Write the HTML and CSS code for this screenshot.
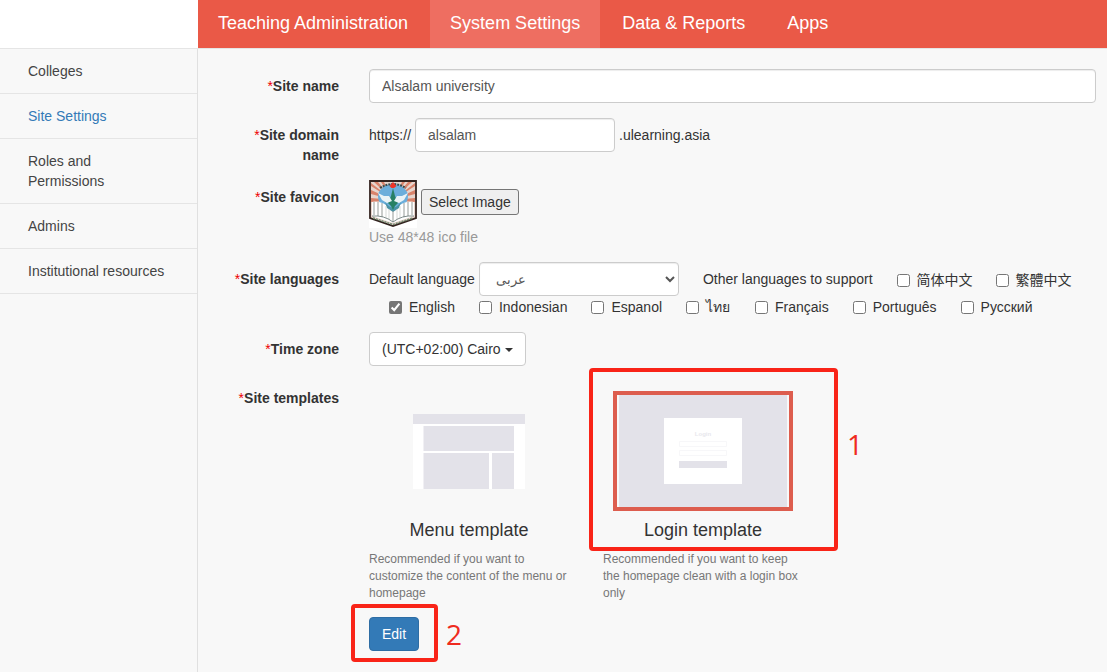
FILE: index.html
```html
<!DOCTYPE html>
<html lang="en">
<head>
<meta charset="utf-8">
<title>Site Settings</title>
<link rel="stylesheet" href="styles.css">
</head>
<body>
<header class="header">
  <div class="brand"></div>
  <nav class="tabs">
    <a class="tab">Teaching Administration</a>
    <a class="tab active">System Settings</a>
    <a class="tab">Data &amp; Reports</a>
    <a class="tab">Apps</a>
  </nav>
</header>
<div class="layout">
  <aside class="sidebar">
    <a class="side-item">Colleges</a>
    <a class="side-item current">Site Settings</a>
    <a class="side-item">Roles and Permissions</a>
    <a class="side-item">Admins</a>
    <a class="side-item">Institutional resources</a>
  </aside>
  <main class="form">
    <div class="row">
      <label class="label"><i>*</i>Site name</label>
      <input class="control" type="text" value="Alsalam university">
    </div>
    <div class="row">
      <label class="label"><i>*</i>Site domain name</label>
      <div class="domain"><span>https://</span><input class="control short" type="text" value="alsalam"><span>.ulearning.asia</span></div>
    </div>
    <div class="row">
      <label class="label"><i>*</i>Site favicon</label>
      <div>
        <div class="favicon">
          <svg width="48" height="48" viewBox="0 0 48 48">
            <rect width="48" height="48" fill="#fff"/>
            <path d="M1 1H47V38L24 46L1 38Z" fill="#e7d5cd" stroke="#33231f" stroke-width="1.8"/>
            <path d="M24 20L2 3V6ZM24 20L5 2H9ZM24 20L12 2H15ZM24 20L2 10V14ZM24 20L2 18V22ZM24 20L46 3V6ZM24 20L43 2H39ZM24 20L36 2H33ZM24 20L46 10V14ZM24 20L46 18V22Z" fill="#d9836b"/>
            <ellipse cx="24" cy="16.500" rx="15" ry="12.500" fill="#6caedb"/>
            <path d="M11 8Q24 0 37 8" fill="none" stroke="#354b50" stroke-width="2" stroke-dasharray="2 1"/>
            <path d="M3 22Q11 21 17 25L24 31L31 25Q37 21 45 22V36L24 43L3 36Z" fill="#fff"/>
            <path d="M16 22Q24 33 32 22L30 28L24 32L18 28Z" fill="#4a92a4"/>
            <path d="M24 8L26 16L29 23L26 26L24 30L22 26L19 23L22 16Z" fill="#278064"/>
            <path d="M24 2L27.500 6L25 8H22.500L20.500 6Z" fill="#ef3326"/>
            <path d="M9 13L15 16L20 16L23 21L18 23L13 20ZM39 13L33 16L28 16L25 21L30 23L35 20Z" fill="#eaf3f6"/>
            <path d="M5 22V35M9 22V36M13 23V37M24 31V42M35 23V37M39 22V36M43 22V35" fill="none" stroke="#8b908d" stroke-width=".9"/>
            <path d="M17 26V38M20 29V40M28 29V40M31 26V38" fill="none" stroke="#c4c9c6" stroke-width=".7"/>
            <path d="M3 36Q15 35 24 42Q33 35 45 36" fill="none" stroke="#606e6d" stroke-width=".8"/>
            <path d="M4 38L24 44.500L44 38" fill="none" stroke="#70886f" stroke-width="1.600" stroke-dasharray="2 1"/>
          </svg>
          <button class="pick">Select Image</button>
        </div>
        <p class="hint">Use 48*48 ico file</p>
      </div>
    </div>
    <div class="row">
      <label class="label"><i>*</i>Site languages</label>
      <div>
        <div class="lang-main">
          <span>Default language</span>
          <select class="control short lang-select"><option>عربى</option></select>
          <span class="other">Other languages to support</span>
          <label class="check cjk"><input type="checkbox"><span>简体中文</span></label>
          <label class="check cjk"><input type="checkbox"><span>繁體中文</span></label>
        </div>
        <div class="langs">
          <label class="check"><input type="checkbox" checked><span>English</span></label>
          <label class="check"><input type="checkbox"><span>Indonesian</span></label>
          <label class="check"><input type="checkbox"><span>Espanol</span></label>
          <label class="check thai"><input type="checkbox"><span>ไทย</span></label>
          <label class="check"><input type="checkbox"><span>Français</span></label>
          <label class="check"><input type="checkbox"><span>Português</span></label>
          <label class="check"><input type="checkbox"><span>Русский</span></label>
        </div>
      </div>
    </div>
    <div class="row">
      <label class="label"><i>*</i>Time zone</label>
      <button class="btn">(UTC+02:00) Cairo<span class="caret"></span></button>
    </div>
    <div class="row">
      <label class="label"><i>*</i>Site templates</label>
      <div>
        <div class="templates">
          <section class="template">
            <svg class="thumb" width="180" height="120" viewBox="0 0 180 120">
              <rect x="34" y="23" width="112" height="75" fill="#fff"/>
              <path d="M34 23h112v10H34zM44.500 35h90.500v25H44.500zM44.500 62h65.500v36H44.500zM113 62h22v36h-22z" fill="#e3e2e9"/>
            </svg>
            <h4 class="title">Menu template</h4>
            <p class="desc">Recommended if you want to customize the content of the menu or homepage</p>
          </section>
          <section class="template">
            <svg class="thumb" width="180" height="120" viewBox="0 0 180 120">
              <rect x="2" y="2" width="176" height="116" fill="#f8f8f8" stroke="#dd5d4e" stroke-width="4"/>
              <rect x="6" y="4" width="168" height="112" fill="#e3e2e9"/>
              <rect x="51" y="27" width="78" height="66" fill="#fff"/>
              <text class="thumb-text" x="90" y="44.500" text-anchor="middle">Login</text>
              <path d="M66.500 50.500h47v5h-47zM66.500 59.500h47v5h-47z" fill="none" stroke="#f7f7f9"/>
              <rect x="66" y="70" width="48" height="7" fill="#e3e2e9"/>
            </svg>
            <h4 class="title">Login template</h4>
            <p class="desc">Recommended if you want to keep the homepage clean with a login box only</p>
          </section>
        </div>
        <button class="btn primary">Edit</button>
      </div>
    </div>
  </main>
</div>
<div class="mark mark-one"></div>
<span class="mark-num num-one">1</span>
<div class="mark mark-two"></div>
<span class="mark-num num-two">2</span>
</body>
</html>
```

FILE: styles.css
```css
* { box-sizing: border-box; }
body {
  margin: 0;
  width: 1107px;
  height: 672px;
  overflow: hidden;
  position: relative;
  background: #f8f8f8;
  color: #333;
  font: 14px/20px "Liberation Sans", Arial, "Noto Sans CJK SC", sans-serif;
}
h4, p { margin: 0; font-weight: normal; }
input, button, select { font: inherit; }

.header { display: flex; height: 49px; border-bottom: 1px solid #e5e5e5; }
.brand { width: 198px; background: #fff; }
.tabs { flex: 1; display: flex; gap: 2px; background: #ea5947; }
.tab { padding: 0 20px; font-size: 18px; line-height: 46px; color: #fff; }
.tab.active { background: #ee6e61; }

.layout { display: flex; height: 623px; }
.sidebar { width: 198px; border-right: 1px solid #e0e0e0; }
.side-item {
  display: block;
  padding: 12px 28px;
  border-bottom: 1px solid #e5e5e5;
  color: #444;
}
.side-item.current { color: #337ab7; }

.form {
  flex: 1;
  display: flex;
  flex-direction: column;
  gap: 15px;
  padding: 20px 11px 0 20px;
}
.row { display: grid; grid-template-columns: 121px 1fr; column-gap: 30px; justify-items: start; }
.label { justify-self: end; padding-top: 7px; font-weight: bold; text-align: right; }
.label i { font-style: normal; font-weight: normal; color: #e00; }

.control {
  width: 100%;
  height: 34px;
  padding: 6px 12px;
  border: 1px solid #ccc;
  border-radius: 4px;
  background: #fff;
  box-shadow: inset 0 1px 1px rgba(0, 0, 0, .075);
  color: #555;
}
.short { width: 200px; }
.domain { display: flex; align-items: center; height: 34px; gap: 4px; }

.favicon { display: flex; align-items: flex-start; gap: 4px; height: 47px; }
.pick {
  height: 26px;
  margin-top: 9px;
  padding: 0 7px;
  border: 1px solid #767676;
  border-radius: 3px;
  background: #efefef;
  color: #333;
}
.hint { color: #999; }

.lang-main { display: flex; align-items: center; height: 34px; white-space: nowrap; }
.lang-select { margin-left: 4px; font-size: 13px; }
.other { margin: 0 24px; }
.check { display: flex; align-items: center; gap: 7px; white-space: nowrap; }
.check input { width: 13px; height: 13px; margin: 1px 0 0; accent-color: #767676; }
.check.cjk { width: 75px; margin-top: 2px; }
.check.cjk + .check.cjk { margin-left: 24px; }
.langs { display: flex; gap: 24px; height: 21px; padding: 1px 0 0 20px; }
.thai { width: 45px; }

.btn {
  height: 34px;
  padding: 0 12px;
  border: 1px solid #ccc;
  border-radius: 4px;
  background: #fff;
  color: #333;
}
.caret {
  display: inline-block;
  margin-left: 4px;
  vertical-align: middle;
  border: 4px solid transparent;
  border-top-color: #333;
  border-bottom: 0;
}
.primary { display: block; margin-top: 15px; border-color: #2e6da4; background: #337ab7; color: #fff; }

.templates { display: flex; gap: 34px; padding-top: 10px; }
.template { width: 200px; }
.thumb { display: block; margin-left: 10px; }
.thumb-text { font-size: 6px; font-weight: bold; fill: #e8e8ed; }
.title { margin: 9px 0 11px; font-size: 18px; line-height: 20px; text-align: center; }
.desc { font-size: 12px; line-height: 17px; color: #777; }

.mark { position: absolute; border: 4px solid #f92418; border-radius: 4px; }
.mark-one { left: 589px; top: 368px; width: 249px; height: 183px; }
.mark-two { left: 351px; top: 604px; width: 87px; height: 58px; }
.mark-num { position: absolute; font: 28px/32px "Open Sans", sans-serif; color: #ef2b20; }
.num-one { left: 847px; top: 428px; }
.num-two { left: 446px; top: 618px; }
```
